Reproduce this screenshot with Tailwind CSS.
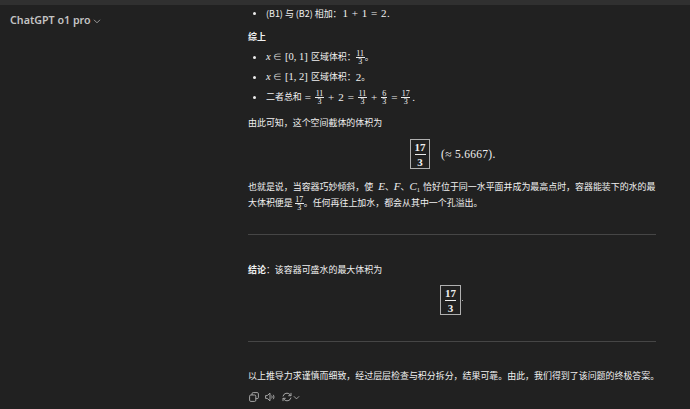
<!DOCTYPE html>
<html lang="zh">
<head>
  <meta charset="UTF-8"/>
  <title>ChatGPT o1 pro</title>
  <script src="https://cdn.jsdelivr.net/npm/@tailwindcss/browser@4"></script>
</head>
<body class="w-[690px] h-[409px] overflow-hidden bg-[#212121] text-[#f0f0f0] font-['Noto_Sans_CJK_SC','Noto_Sans',sans-serif] text-[8.95px] leading-[16px]">
  <div class="h-[5px] bg-[#303030]"></div>
  <div class="flex">

    <!-- sidebar header -->
    <aside class="w-[248px] shrink-0 pl-[10px] pt-[7px]">
      <div class="flex items-center gap-[2px] h-[16px]">
        <span class="font-['Noto_Sans',sans-serif] font-semibold text-[10.7px] text-[#c4c4c4]">ChatGPT o1 pro</span>
        <svg class="w-[8px] h-[8px] mt-[1px]" viewBox="0 0 8 8" fill="none" stroke="#a8a8a8" stroke-width="0.9"><path d="M1 2.8 4 5.8 7 2.8"/></svg>
      </div>
    </aside>

    <!-- conversation -->
    <main class="w-[408px]">
      <ul class="h-[16px] flex items-center">
        <li class="flex items-center">
          <span class="w-[3px] h-[3px] rounded-full bg-[#ececec] ml-[5px] mr-[10px]"></span>
          <span>(B1) 与 (B2) 相加：<span class="font-['Liberation_Serif',serif] text-[11px] ml-[1px] tracking-[0.5px]">1 + 1 = 2.</span></span>
        </li>
      </ul>

      <p class="mt-[8px] font-bold">综上</p>

      <ul class="mt-[2px] flex flex-col">
        <li class="flex items-center h-[20px]">
          <span class="w-[3px] h-[3px] rounded-full bg-[#ececec] ml-[5px] mr-[10px]"></span>
          <span class="font-['Liberation_Serif',serif] text-[10.5px] mr-[4px] w-[41px] whitespace-nowrap"><i>x</i> ∈ [0, 1]</span>
          <span>区域体积：</span>
          <span class="inline-flex flex-col items-center w-[9px] font-['Liberation_Serif',serif] text-[8px] leading-[7px]"><span>11</span><span class="h-px w-full bg-[#ececec]"></span><span>3</span></span>
          <span>。</span>
        </li>
        <li class="flex items-center h-[20px]">
          <span class="w-[3px] h-[3px] rounded-full bg-[#ececec] ml-[5px] mr-[10px]"></span>
          <span class="font-['Liberation_Serif',serif] text-[10.5px] mr-[4px] w-[41px] whitespace-nowrap"><i>x</i> ∈ [1, 2]</span>
          <span>区域体积：</span>
          <span class="font-['Liberation_Serif',serif] text-[11px]">2</span>
          <span>。</span>
        </li>
        <li class="flex items-center h-[20px]">
          <span class="w-[3px] h-[3px] rounded-full bg-[#ececec] ml-[5px] mr-[10px]"></span>
          <span>二者总和</span>
          <span class="font-['Liberation_Serif',serif] text-[11px] flex items-center gap-[4px] ml-[3px]">
            <span>=</span>
            <span class="inline-flex flex-col items-center w-[9px] text-[8px] leading-[7px]"><span>11</span><span class="h-px w-full bg-[#ececec]"></span><span>3</span></span>
            <span>+</span><span>2</span><span>=</span>
            <span class="inline-flex flex-col items-center w-[9px] text-[8px] leading-[7px]"><span>11</span><span class="h-px w-full bg-[#ececec]"></span><span>3</span></span>
            <span>+</span>
            <span class="inline-flex flex-col items-center w-[6px] text-[8px] leading-[7px]"><span>6</span><span class="h-px w-full bg-[#ececec]"></span><span>3</span></span>
            <span>=</span>
            <span class="inline-flex flex-col items-center w-[9px] text-[8px] leading-[7px]"><span>17</span><span class="h-px w-full bg-[#ececec]"></span><span>3</span></span>
            <span class="ml-[-2px]">.</span>
          </span>
        </li>
      </ul>

      <p class="mt-[8px]">由此可知，这个空间截体的体积为</p>

      <div class="mt-[8px] h-[30px] flex items-center font-['Liberation_Serif',serif] pl-[162px]">
        <span class="w-[20px] h-[30px] border border-[#b0b0b0] flex flex-col items-center justify-center text-[11px] leading-[12px] font-bold">
          <span>17</span><span class="h-px w-[11px] bg-[#ececec] my-[1px]"></span><span>3</span>
        </span>
        <span class="ml-[11px] text-[11.5px] tracking-[0.3px]">(≈ 5.6667).</span>
      </div>

      <p class="mt-[9px] whitespace-nowrap">也就是说，当容器巧妙倾斜，使<span class="ml-[5px] font-['Liberation_Serif',serif] italic text-[11px]">E</span>、<span class="font-['Liberation_Serif',serif] italic text-[11px]">F</span>、<span class="font-['Liberation_Serif',serif] italic text-[11px]">C<sub class="text-[6.5px] not-italic">1</sub></span><span class="ml-[3px]">恰好位于同一水平面并成为最高点时，容器能装下的水的最</span></p>
      <p class="flex items-center h-[16px]">大体积便是&nbsp;<span class="inline-flex flex-col items-center w-[9px] font-['Liberation_Serif',serif] text-[8px] leading-[7px]"><span>17</span><span class="h-px w-full bg-[#ececec]"></span><span>3</span></span>。任何再往上加水，都会从其中一个孔溢出。</p>

      <hr class="mt-[23px] border-t border-[#464646]"/>

      <p class="mt-[27px]"><span class="font-bold">结论</span>：该容器可盛水的最大体积为</p>

      <div class="mt-[7px] h-[30px] flex items-center font-['Liberation_Serif',serif] pl-[192px]">
        <span class="w-[21px] h-[30px] border border-[#b0b0b0] flex flex-col items-center justify-center text-[11px] leading-[12px] font-bold">
          <span>17</span><span class="h-px w-[11px] bg-[#ececec] my-[1px]"></span><span>3</span>
        </span>
        <span class="w-px h-px bg-[#aaaaaa] ml-[1px] mt-[1px]"></span>
      </div>

      <hr class="mt-[26px] border-t border-[#464646]"/>

      <p class="mt-[26px] whitespace-nowrap">以上推导力求谨慎而细致，经过层层检查与积分拆分，结果可靠。由此，我们得到了该问题的终极答案。</p>

      <!-- message actions -->
      <div class="flex items-center mt-[8px] ml-[1px] text-[#b4b4b4]">
        <svg class="w-[10px] h-[10px]" viewBox="0 0 10 10" fill="none" stroke="currentColor" stroke-width="0.9">
          <rect x="0.6" y="3" width="6.2" height="6.4" rx="1.2"/>
          <path d="M3 3V1.8A1.2 1.2 0 0 1 4.2.6h4A1.2 1.2 0 0 1 9.4 1.8v3.6A1.2 1.2 0 0 1 8.2 6.6H6.8"/>
        </svg>
        <svg class="w-[10px] h-[10px] ml-[6px]" viewBox="0 0 10 10" fill="none" stroke="currentColor" stroke-width="0.9">
          <path d="M.6 3.6h1.6L5 1.2v7.6L2.2 6.4H.6z"/>
          <path d="M6.6 3.6c.6.8.6 2 0 2.8M8.2 2.8c1 1.3 1 3.1 0 4.4"/>
        </svg>
        <svg class="w-[10px] h-[10px] ml-[7px]" viewBox="0 0 10 10" fill="none" stroke="currentColor" stroke-width="0.9">
          <path d="M1 4.4A4 4 0 0 1 8 2.6l1 1M9 .9v2.8H6.3"/>
          <path d="M9 5.6A4 4 0 0 1 2 7.4l-1-1M1 9.1V6.3h2.7"/>
        </svg>
        <svg class="w-[7px] h-[7px] ml-[1px]" viewBox="0 0 8 8" fill="none" stroke="currentColor" stroke-width="1"><path d="M1 2.6 4 5.6 7 2.6"/></svg>
      </div>
    </main>
  </div>
</body>
</html>
